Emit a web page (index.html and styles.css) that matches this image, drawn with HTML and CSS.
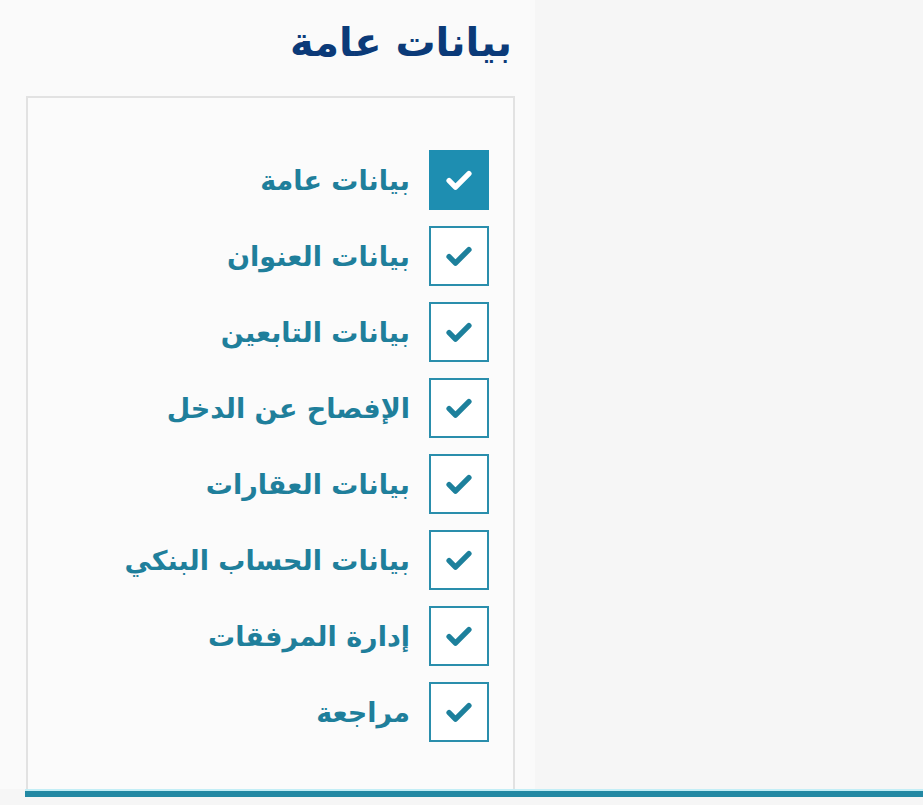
FILE: index.html
```html
<!DOCTYPE html>
<html lang="ar">
<head>
  <meta charset="UTF-8">
  <title>بيانات عامة</title>
  <link rel="stylesheet" href="styles.css">
</head>
<body>

  <div class="sheet" dir="rtl">
    <h1>بيانات عامة</h1>

    <div class="steps">
      <div class="step done active">
        <span class="box"><svg viewBox="0 0 24 24"><path d="M5 12.5l4.5 4.5L19 7.5"/></svg></span>
        <span class="label">بيانات عامة</span>
      </div>
      <div class="step done">
        <span class="box"><svg viewBox="0 0 24 24"><path d="M5 12.5l4.5 4.5L19 7.5"/></svg></span>
        <span class="label">بيانات العنوان</span>
      </div>
      <div class="step done">
        <span class="box"><svg viewBox="0 0 24 24"><path d="M5 12.5l4.5 4.5L19 7.5"/></svg></span>
        <span class="label">بيانات التابعين</span>
      </div>
      <div class="step done">
        <span class="box"><svg viewBox="0 0 24 24"><path d="M5 12.5l4.5 4.5L19 7.5"/></svg></span>
        <span class="label">الإفصاح عن الدخل</span>
      </div>
      <div class="step done">
        <span class="box"><svg viewBox="0 0 24 24"><path d="M5 12.5l4.5 4.5L19 7.5"/></svg></span>
        <span class="label">بيانات العقارات</span>
      </div>
      <div class="step done">
        <span class="box"><svg viewBox="0 0 24 24"><path d="M5 12.5l4.5 4.5L19 7.5"/></svg></span>
        <span class="label">بيانات الحساب البنكي</span>
      </div>
      <div class="step done">
        <span class="box"><svg viewBox="0 0 24 24"><path d="M5 12.5l4.5 4.5L19 7.5"/></svg></span>
        <span class="label">إدارة المرفقات</span>
      </div>
      <div class="step done">
        <span class="box"><svg viewBox="0 0 24 24"><path d="M5 12.5l4.5 4.5L19 7.5"/></svg></span>
        <span class="label">مراجعة</span>
      </div>
    </div>
  </div>

  <div class="bar"></div>

</body>
</html>
```

FILE: styles.css
```css
html, body {
  margin: 0;
  padding: 0;
}
body {
  background-color: #f6f6f6;
  font-family: 'DejaVu Sans', 'Noto Sans', sans-serif;
  height: 805px;
  overflow: hidden;
}
.sheet {
  width: 535px;
  background-color: #fafafa;
  padding-top: 14px;
}
h1 {
  margin: 0 23px 0 0;
  height: 82px;
  font-size: 40px;
  font-weight: bold;
  color: #0b3a78;
  line-height: 56px;
  text-align: right;
}
.steps {
  margin: 0 20px 0 26px;
  height: 639px;
  padding-top: 52px;
  border: 2px solid #e2e2e2;
  border-bottom: none;
  background-color: #fbfbfb;
  display: flex;
  flex-direction: column;
  gap: 16px;
}
.step {
  display: flex;
  align-items: center;
  gap: 19px;
  padding-right: 24px;
}
.step .box {
  box-sizing: border-box;
  width: 60px;
  height: 60px;
  border: 2px solid #2a8eac;
  background-color: #fff;
  display: flex;
  align-items: center;
  justify-content: center;
}
.step .box svg {
  width: 34px;
  height: 34px;
  fill: none;
  stroke: #1d809c;
  stroke-width: 3.8;
  stroke-linecap: round;
  stroke-linejoin: round;
}
.step.active .box {
  background-color: #1e8eb1;
  border-color: #1e8eb1;
}
.step.active .box svg {
  stroke: #fff;
}
.step .label {
  font-size: 27px;
  font-weight: bold;
  color: #1f7f9b;
}
.bar {
  margin-left: 25px;
  height: 6px;
  background-color: #2389a4;
  border-top: 2px solid #c3eef6;
}
```
